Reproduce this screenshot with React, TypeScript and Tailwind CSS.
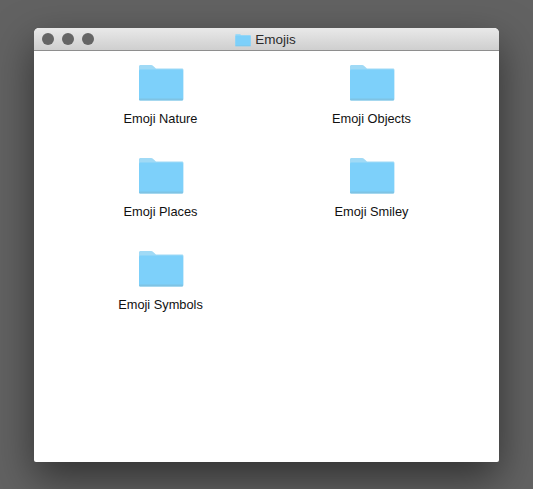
function FolderIcon({ className }: { className: string }) {
  return (
    <svg viewBox="0 0 46 37" className={className}>
      <path d="M1 35V2.500C1 1.600 1.600 1 2.500 1H13c1 0 1.600.4 2.200 1L18 4.500h26c.9 0 1.500.6 1.500 1.500v29c0 .9-.6 1.500-1.500 1.500H2.500C1.600 36.500 1 35.900 1 35z" fill="#a0daf6" />
      <path d="M1 7C1 6.200 1.600 5.500 2.500 5.500h41c.9 0 1.500.7 1.500 1.500V34.500c0 .9-.6 1.500-1.500 1.500h-41C1.600 36 1 35.400 1 34.500z" fill="#7dd0fa" />
      <rect x="1" y="34.500" width="44" height="2" rx="1" fill="#7fc3e4" />
    </svg>
  );
}

const folders = [
  "Emoji Nature",
  "Emoji Objects",
  "Emoji Places",
  "Emoji Smiley",
  "Emoji Symbols",
];

export default function App() {
  return (
    <div className="h-[489px] w-[533px] overflow-hidden bg-[#626262] pl-[34px] pt-[28px] font-['Liberation_Sans',sans-serif]">
      <div className="flex h-[434px] w-[465px] flex-col overflow-hidden rounded-t-[5px] rounded-b-[2px] bg-white shadow-[0_16px_40px_rgba(0,0,0,0.5)]">
        <div className="relative flex h-[23px] shrink-0 items-center justify-center border-b border-[#8e8e8e] bg-gradient-to-b from-[#e9e9e9] to-[#cfcfcf]">
          <div className="absolute left-[8px] top-[5px] flex gap-[8px]">
            <span className="h-[12px] w-[12px] rounded-full bg-[#656565]" />
            <span className="h-[12px] w-[12px] rounded-full bg-[#656565]" />
            <span className="h-[12px] w-[12px] rounded-full bg-[#656565]" />
          </div>
          <div className="flex items-center gap-[4px] pr-[2px] pt-[1px]">
            <FolderIcon className="h-[16px] w-[16px]" />
            <span className="text-[13.500px] leading-none text-[#2b2b2b]">Emojis</span>
          </div>
        </div>
        <div className="grid grid-cols-[211px_211px] auto-rows-[93px] pl-[21px] pt-[13px]">
          {folders.map((name) => (
            <div key={name} className="flex flex-col items-center">
              <FolderIcon className="h-[37px] w-[46px]" />
              <span className="mt-[10px] text-[12.800px] leading-[15px] text-[#111]">{name}</span>
            </div>
          ))}
        </div>
      </div>
    </div>
  );
}
